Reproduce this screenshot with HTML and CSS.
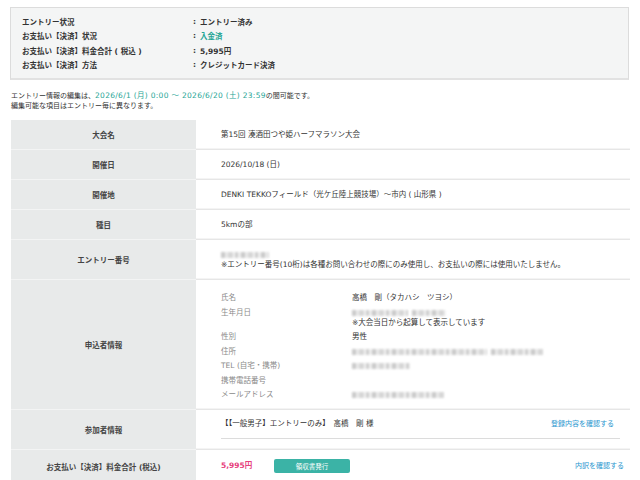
FILE: index.html
```html
<!DOCTYPE html>
<html lang="ja">
<head>
  <meta charset="UTF-8">
  <meta name="viewport" content="width=device-width, initial-scale=1.0">
  <title>エントリー内容の確認</title>
  <link rel="stylesheet" href="styles.css">
</head>
<body>
  <div class="page">
    <div class="summary">
      <div class="summary-row">
        <span class="summary-label">エントリー状況</span>
        <span class="summary-colon">:</span>
        <span>エントリー済み</span>
      </div>
      <div class="summary-row">
        <span class="summary-label">お支払い【決済】状況</span>
        <span class="summary-colon">:</span>
        <span class="teal">入金済</span>
      </div>
      <div class="summary-row">
        <span class="summary-label">お支払い【決済】料金合計 ( 税込 )</span>
        <span class="summary-colon">:</span>
        <span>5,995円</span>
      </div>
      <div class="summary-row">
        <span class="summary-label">お支払い【決済】方法</span>
        <span class="summary-colon">:</span>
        <span>クレジットカード決済</span>
      </div>
    </div>

    <p class="notice">エントリー情報の編集は、<span class="teal period">2026/6/1 (月) 0:00 ～ 2026/6/20 (土) 23:59</span>の間可能です。<br>編集可能な項目はエントリー毎に異なります。</p>

    <div class="detail">
      <div class="row">
        <div class="row-label">大会名</div>
        <div class="row-value">第15回 湊酒田つや姫ハーフマラソン大会</div>
      </div>
      <div class="row">
        <div class="row-label">開催日</div>
        <div class="row-value">2026/10/18 (日)</div>
      </div>
      <div class="row">
        <div class="row-label">開催地</div>
        <div class="row-value">DENKI TEKKOフィールド（光ケ丘陸上競技場）～市内 ( 山形県 )</div>
      </div>
      <div class="row">
        <div class="row-label">種目</div>
        <div class="row-value">5kmの部</div>
      </div>
      <div class="row">
        <div class="row-label">エントリー番号</div>
        <div class="row-value">
          <div class="line"><span class="blur blur-id"></span></div>
          <div class="line">※エントリー番号(10桁)は各種お問い合わせの際にのみ使用し、お支払いの際には使用いたしません。</div>
        </div>
      </div>
      <div class="row">
        <div class="row-label">申込者情報</div>
        <div class="row-value applicant">
          <div class="sub-label">氏名</div>
          <div>高橋　剛（タカハシ　ツヨシ）</div>
          <div class="sub-label">生年月日</div>
          <div>
            <div class="line"><span class="blur blur-birth"></span><span class="blur blur-age"></span></div>
            <div class="line">※大会当日から起算して表示しています</div>
          </div>
          <div class="sub-label">性別</div>
          <div>男性</div>
          <div class="sub-label">住所</div>
          <div class="line"><span class="blur blur-address"></span><span class="blur blur-town"></span></div>
          <div class="sub-label">TEL (自宅・携帯)</div>
          <div class="line"><span class="blur blur-tel"></span></div>
          <div class="sub-label">携帯電話番号</div>
          <div></div>
          <div class="sub-label">メールアドレス</div>
          <div class="line"><span class="blur blur-mail"></span></div>
        </div>
      </div>
      <div class="row">
        <div class="row-label">参加者情報</div>
        <div class="row-value participant-cell">
          <div class="participant">
            <span>【【一般男子】エントリーのみ】　高橋　剛 様</span>
            <a class="link" href="#">登録内容を確認する</a>
          </div>
        </div>
      </div>
      <div class="row">
        <div class="row-label">お支払い【決済】料金合計 (税込)</div>
        <div class="row-value payment">
          <span class="amount">5,995円</span>
          <button class="receipt">領収書発行</button>
          <a class="link push" href="#">内訳を確認する</a>
        </div>
      </div>
    </div>
  </div>
</body>
</html>
```

FILE: styles.css
```css
body {
  margin: 0;
  font-family: "DejaVu Sans", "Noto Sans CJK JP", sans-serif;
  font-size: 7.5px;
  color: #333;
  background: #fff;
}
.page {
  padding: 7px 10px 0;
}
.teal {
  color: #26a596;
}
.summary {
  width: 619px;
  box-sizing: border-box;
  background: #f4f5f5;
  border: 1px solid #dcdcdc;
  border-bottom: 2px solid #e2e2e2;
  padding: 6px 11px;
}
.summary-row {
  display: flex;
  align-items: center;
  height: 14.5px;
  font-weight: bold;
}
.summary-label {
  width: 171px;
}
.summary-colon {
  width: 7px;
}
.notice {
  margin: 11px 0 9px 1px;
  line-height: 10px;
  font-size: 7px;
}
.period {
  font-size: 7.5px;
  letter-spacing: 0.3px;
}
.detail {
  width: 619px;
  margin-left: 1px;
}
.row {
  display: grid;
  grid-template-columns: 185px 1fr;
}
.row-label {
  background: #e8eaea;
  border-bottom: 1px solid #f3f4f4;
  display: flex;
  align-items: center;
  justify-content: center;
  font-weight: bold;
  color: #444;
}
.row-value {
  padding: 10px 10px 9px 25px;
  line-height: 10px;
  border-bottom: 1px solid #e6e6e6;
  box-shadow: inset 0 -1px 0 #f4f4f4;
}
.line {
  height: 10px;
  display: flex;
  align-items: center;
  gap: 4px;
}
.blur {
  display: inline-block;
  height: 6px;
  background: repeating-linear-gradient(90deg, #a8a8a8 0 4px, #dcdcdc 4px 7px, #bcbcbc 7px 12px, #ececec 12px 14px, #b0b0b0 14px 17px, #e4e4e4 17px 20px);
  filter: blur(0.9px);
  opacity: 0.6;
}
.blur-id { width: 48px; }
.blur-birth { width: 56px; }
.blur-age { width: 34px; }
.blur-address { width: 135px; }
.blur-town { width: 52px; }
.blur-tel { width: 58px; }
.blur-mail { width: 92px; }
.applicant {
  display: grid;
  grid-template-columns: 131px 1fr;
  row-gap: 4.5px;
  padding-top: 13px;
}
.sub-label {
  color: #8a8a8a;
}
.participant-cell {
  padding: 9px 10px 10px 25px;
}
.participant {
  display: flex;
  justify-content: space-between;
  padding: 0 6px 9px 0;
  border-bottom: 1px solid #dcdcdc;
}
.link {
  color: #2b97cf;
  text-decoration: none;
  font-size: 7px;
}
.payment {
  display: flex;
  align-items: center;
  padding-top: 9px;
  padding-right: 6px;
}
.amount {
  width: 53px;
  color: #e6407c;
  font-weight: bold;
}
.receipt {
  width: 76px;
  height: 14px;
  border: none;
  border-radius: 2px;
  background: #3bb3a6;
  color: #fff;
  font-family: inherit;
  font-size: 6.5px;
  padding: 0;
}
.push {
  margin-left: auto;
}
```
